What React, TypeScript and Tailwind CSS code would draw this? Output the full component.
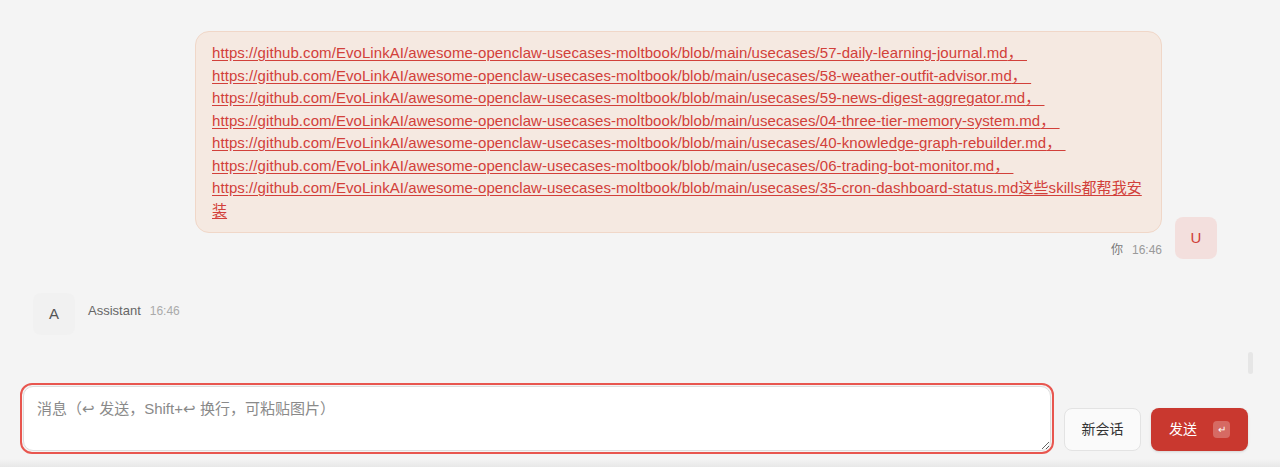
import React from 'react'

const base = 'https://github.com/EvoLinkAI/awesome-openclaw-usecases-moltbook/blob/main/usecases/'
const files = [
    '57-daily-learning-journal.md',
    '58-weather-outfit-advisor.md',
    '59-news-digest-aggregator.md',
    '04-three-tier-memory-system.md',
    '40-knowledge-graph-rebuilder.md',
    '06-trading-bot-monitor.md',
]

const App = () => {
    return (
        <div
            className="relative w-full h-[467px] flex flex-col bg-[#f4f4f4] overflow-hidden"
            style={{ fontFamily: '"Liberation Sans", "Noto Sans CJK SC", sans-serif' }}
        >
            {/* ---- messages ---- */}
            <div className="flex-1 flex flex-col pt-[31px] pl-[33px] pr-[63px]">
                {/* user message */}
                <div className="flex items-end justify-end gap-[13px]">
                    <div className="flex flex-col items-end">
                        <div className="w-[967px] bg-[#f5e9e1] border border-[#f0d7c8] rounded-[14px] px-4 py-[10px] text-[15px] leading-[1.5] tracking-[0.07px] text-[#d2403a]">
                            <span className="underline decoration-[#d2403a] underline-offset-2">
                                {files.map((f) => (
                                    <React.Fragment key={f}>
                                        {base + f}，&nbsp;
                                        <br />
                                    </React.Fragment>
                                ))}
                                {base}35-cron-dashboard-status.md这些skills都帮我安
                                <br />
                                装
                            </span>
                        </div>
                        <div className="mt-[11px] flex items-center gap-[9px] text-[12px] leading-none text-[#9a9a9a]">
                            <span className="text-[#777]">你</span>
                            <span>16:46</span>
                        </div>
                    </div>
                    <div className="w-[42px] h-[42px] mb-[-3px] rounded-lg bg-[#f3dfdd] flex items-center justify-center text-[15px] font-medium text-[#cf3d37]">
                        U
                    </div>
                </div>

                {/* assistant message */}
                <div className="mt-[37px] flex items-start gap-[13px]">
                    <div className="w-[42px] h-[42px] rounded-lg bg-[#f1f1f1] flex items-center justify-center text-[15px] font-medium text-[#555]">
                        A
                    </div>
                    <div className="pt-[8px] flex items-center gap-[9px]">
                        <span className="text-[13px] text-[#666]">Assistant</span>
                        <span className="text-[12px] text-[#aaa]">16:46</span>
                    </div>
                </div>
            </div>

            {/* ---- composer ---- */}
            <div className="flex items-end gap-[10px] pl-5 pr-8 pb-[13px]">
                <div className="flex-1 border-2 border-[#e8564f] rounded-[12px] p-px">
                    <textarea
                        className="block w-full h-[65px] resize-y bg-white border border-[#dedede] rounded-[10px] px-[13px] py-[11px] text-[15px] leading-[1.5] text-[#333] placeholder:text-[#8a8a8a] outline-none"
                        placeholder="消息（↩ 发送，Shift+↩ 换行，可粘贴图片）"
                    />
                </div>
                <button className="mb-[3px] h-[43px] w-[77px] rounded-lg border border-[#e3e3e3] bg-[#fafafa] text-[14px] text-[#333]">
                    新会话
                </button>
                <button className="mb-[3px] h-[43px] w-[97px] rounded-lg bg-[#c9382f] text-[14px] text-white flex items-center justify-center gap-[16px] shadow-sm">
                    <span>发送</span>
                    <span className="w-[17px] h-[17px] rounded bg-white/25 text-[10px] flex items-center justify-center">↵</span>
                </button>
            </div>
            <div className="absolute left-0 right-0 bottom-0 h-[8px] bg-gradient-to-b from-transparent to-[#e8e8e8]" />

            {/* scrollbar thumb */}
            <div className="absolute left-[1248px] top-[352px] w-[5px] h-[22px] rounded-full bg-[#e6e6e6]" />
        </div>
    )
}

export default App
